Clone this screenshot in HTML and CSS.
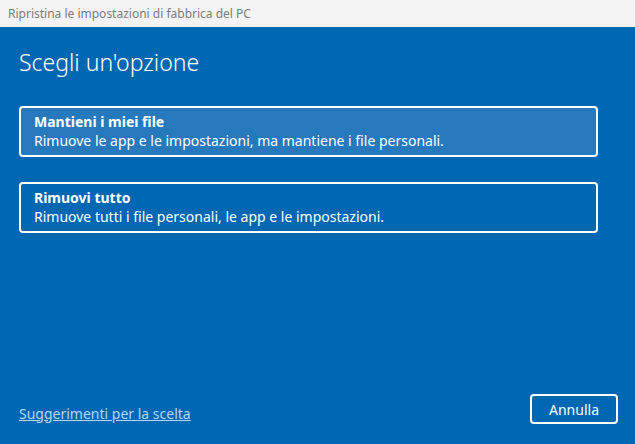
FILE: index.html
```html
<!DOCTYPE html>
<html lang="it">
<head>
<meta charset="utf-8">
<title>Ripristina le impostazioni di fabbrica del PC</title>
<link rel="stylesheet" href="styles.css">
</head>
<body>
<div class="titlebar">Ripristina le impostazioni di fabbrica del PC</div>
<main class="main">
  <h1 class="heading">Scegli un'opzione</h1>
  <div class="options">
    <div class="option option-active">
      <div class="option-title">Mantieni i miei file</div>
      <div class="option-desc">Rimuove le app e le impostazioni, ma mantiene i file personali.</div>
    </div>
    <div class="option">
      <div class="option-title">Rimuovi tutto</div>
      <div class="option-desc">Rimuove tutti i file personali, le app e le impostazioni.</div>
    </div>
  </div>
  <div class="footer">
    <a class="link" href="#">Suggerimenti per la scelta</a>
    <button class="btn">Annulla</button>
  </div>
</main>
</body>
</html>
```
FILE: styles.css
```css
* { box-sizing: border-box; }
html, body { margin: 0; padding: 0; }
body {
  width: 635px;
  height: 444px;
  overflow: hidden;
  font-family: "Noto Sans", "Open Sans", sans-serif;
  background: #0067b3;
}
.titlebar {
  height: 27px;
  line-height: 27px;
  padding-left: 8px;
  background: #f3f3f3;
  color: #7c7c7c;
  font-size: 12px;
}
.main {
  height: 417px;
  background: #0067b3;
  color: #ffffff;
  padding: 0 17px 20px 19px;
  display: flex;
  flex-direction: column;
}
.heading {
  margin: 20px 0 0 0;
  font-size: 23px;
  line-height: 30px;
  font-weight: 300;
}
.options {
  margin-top: 29px;
  margin-right: 20px;
  display: flex;
  flex-direction: column;
  gap: 25px;
}
.option {
  border: 2px solid #ffffff;
  border-radius: 4px;
  padding: 4px 12px 5px 13px;
  font-size: 14px;
  line-height: 19px;
}
.option-active {
  background: #2679bd;
}
.option-title {
  font-weight: 700;
}
.footer {
  margin-top: auto;
  display: flex;
  align-items: center;
  justify-content: space-between;
}
.link {
  color: #b3d6f3;
  font-size: 14px;
  line-height: 19px;
  text-decoration: underline;
  margin-top: 8px;
}
.btn {
  width: 88px;
  height: 30px;
  background: transparent;
  border: 2px solid #ffffff;
  border-radius: 4px;
  color: #ffffff;
  font-family: inherit;
  font-size: 14px;
  padding: 0;
}
```
